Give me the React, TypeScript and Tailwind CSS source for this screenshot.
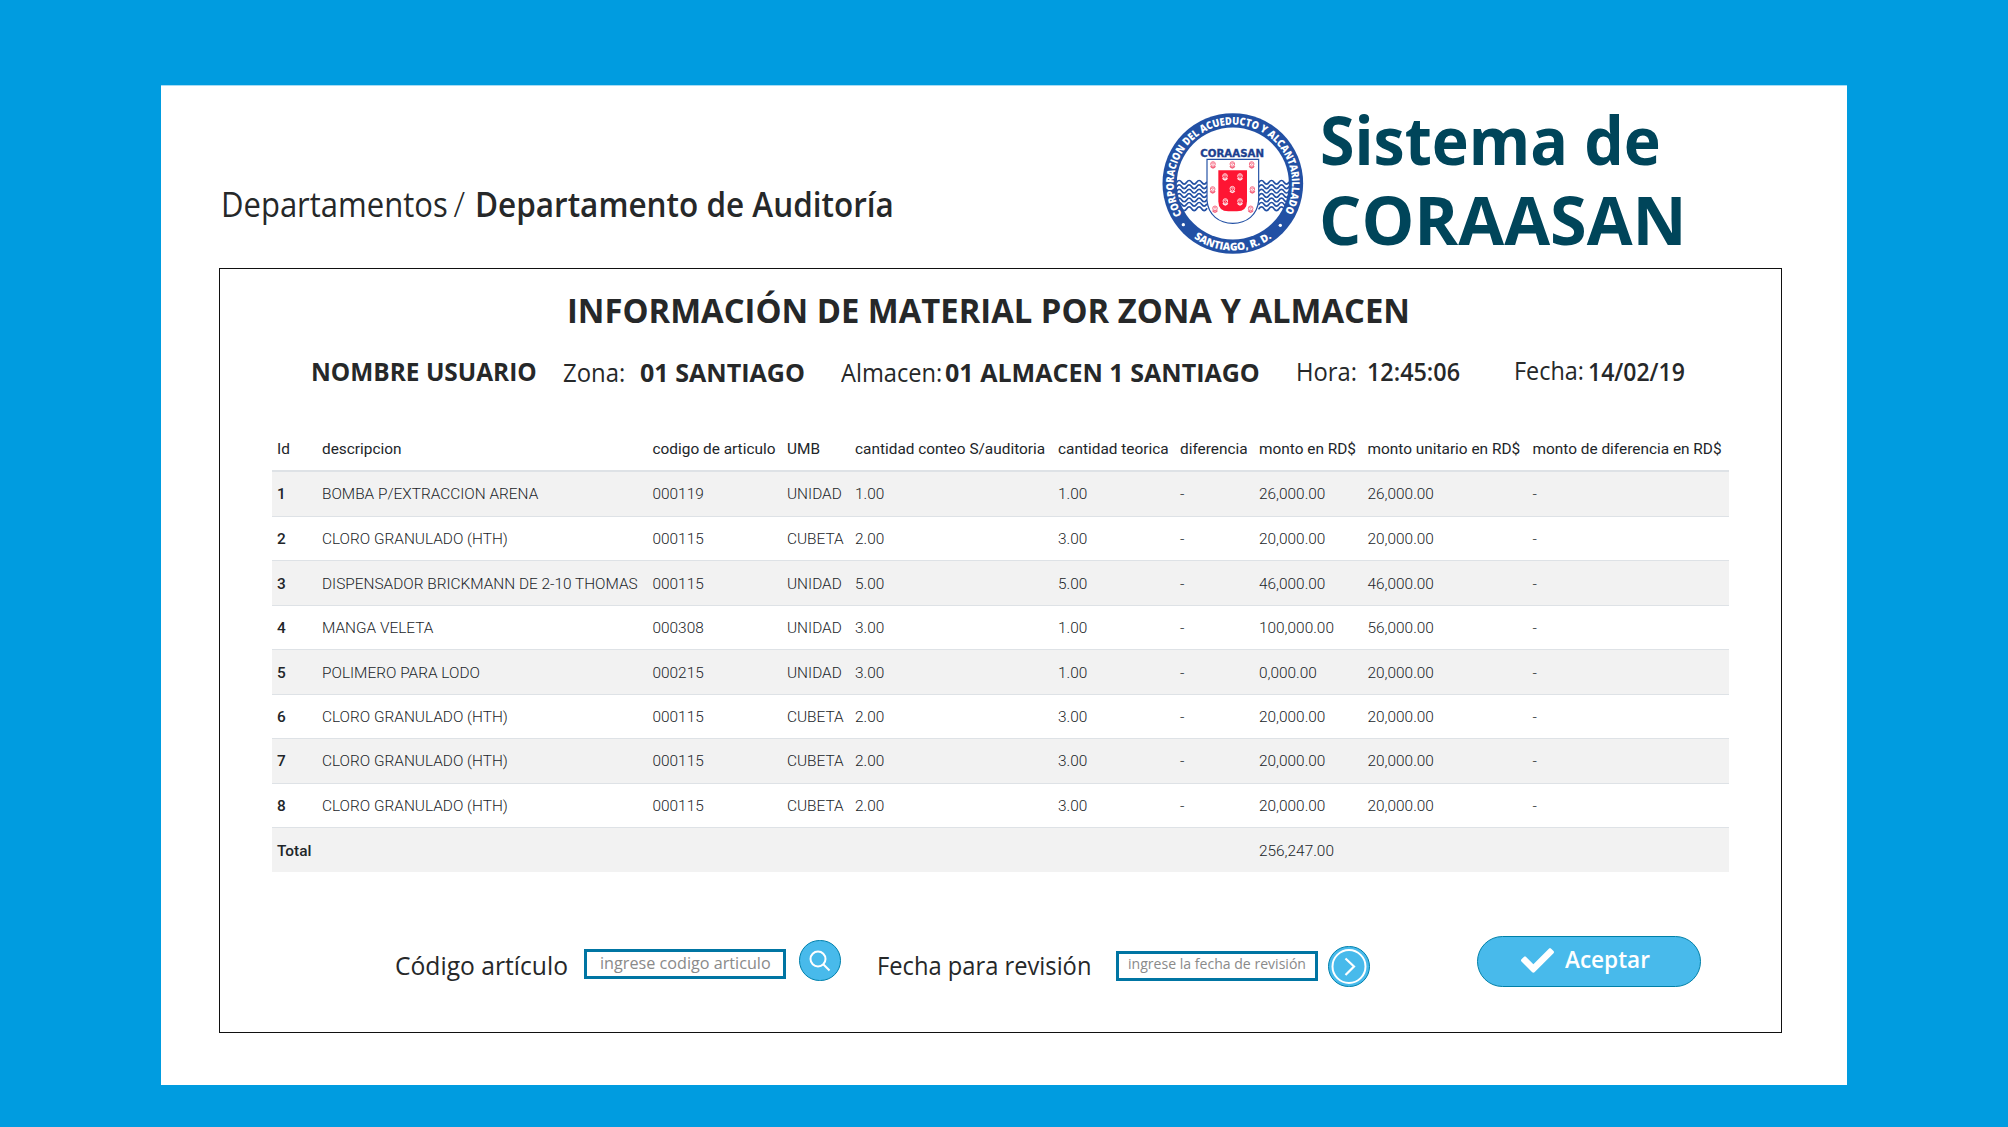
import React from 'react';

type TextProps = { box?: string; fit: string; children: React.ReactNode };

/** One line of text, condensed horizontally inside a box of fixed width. */
function Line({ box = '', fit, children }: TextProps) {
  return (
    <span className={`block shrink-0 whitespace-nowrap ${box}`}>
      <span className={`inline-block origin-left align-top ${fit}`}>{children}</span>
    </span>
  );
}

const columns = [
  'Id',
  'descripcion',
  'codigo de articulo',
  'UMB',
  'cantidad conteo S/auditoria',
  'cantidad teorica',
  'diferencia',
  'monto en RD$',
  'monto unitario en RD$',
  'monto de diferencia en RD$',
];

const rows = [
  ['1', 'BOMBA P/EXTRACCION ARENA', '000119', 'UNIDAD', '1.00', '1.00', '-', '26,000.00', '26,000.00', '-'],
  ['2', 'CLORO GRANULADO (HTH)', '000115', 'CUBETA', '2.00', '3.00', '-', '20,000.00', '20,000.00', '-'],
  ['3', 'DISPENSADOR BRICKMANN DE 2-10 THOMAS', '000115', 'UNIDAD', '5.00', '5.00', '-', '46,000.00', '46,000.00', '-'],
  ['4', 'MANGA VELETA', '000308', 'UNIDAD', '3.00', '1.00', '-', '100,000.00', '56,000.00', '-'],
  ['5', 'POLIMERO PARA LODO', '000215', 'UNIDAD', '3.00', '1.00', '-', '0,000.00', '20,000.00', '-'],
  ['6', 'CLORO GRANULADO (HTH)', '000115', 'CUBETA', '2.00', '3.00', '-', '20,000.00', '20,000.00', '-'],
  ['7', 'CLORO GRANULADO (HTH)', '000115', 'CUBETA', '2.00', '3.00', '-', '20,000.00', '20,000.00', '-'],
  ['8', 'CLORO GRANULADO (HTH)', '000115', 'CUBETA', '2.00', '3.00', '-', '20,000.00', '20,000.00', '-'],
  ['Total', '', '', '', '', '', '', '256,247.00', '', ''],
];

const gridCols =
  'grid grid-cols-[45px_330.5px_134.5px_68px_203px_122px_79px_108.5px_165px_201.5px] items-center';

function Table() {
  return (
    <div className="mt-10 ml-[52px] w-[1457px] text-[15.4px] leading-5 whitespace-nowrap text-[#212529] [font-family:Roboto,sans-serif]">
      <div className={`${gridCols} h-[45px] border-b-2 border-[#dee2e6]`}>
        {columns.map((name) => (
          <div key={name} className="pl-[5px]">
            {name}
          </div>
        ))}
      </div>
      {rows.map((cells, r) => (
        <div
          key={r}
          className={`${gridCols} border-[#dee2e6] ${r === 2 || r === 4 || r === 8 ? 'pt-[2px]' : 'pt-px'} ${
            r % 2 === 0 ? 'bg-[#f2f2f2]' : 'bg-white'
          } ${r < rows.length - 1 ? 'h-[44.5px] border-b' : 'h-[43.5px]'}`}
        >
          {cells.map((cell, c) => (
            <div key={c} className={c === 0 ? 'pl-[5px] font-medium' : 'pl-[5px] font-light'}>
              {cell}
            </div>
          ))}
        </div>
      ))}
    </div>
  );
}

const redEmblems = [
  [189, 195], [247, 195], [305, 195], [188, 270], [307, 270], [195, 328], [302, 328],
];
const whiteEmblems = [
  [225, 231], [270, 231], [247, 269], [226, 306], [270, 306],
];

function Emblem({ x, y, color, hole }: { x: number; y: number; color: string; hole: string }) {
  return (
    <g transform={`translate(${x} ${y})`}>
      <circle cy="-3" r="7" fill={hole} stroke={color} strokeWidth="2.6" />
      <path d="M-4 -3a4 4 0 0 1 8 0M0 -5v6" fill="none" stroke={color} strokeWidth="2" />
      <path d="M-9 4l4-1 5 4 5-4 4 1-3 4-6 3-6-3z" fill={color} />
    </g>
  );
}

function Waves({ x }: { x: number }) {
  return (
    <g fill="none" stroke="#2250a4" strokeWidth="5" strokeLinecap="round">
      {[0, 1, 2, 3, 4, 5, 6].map((i) => (
        <path key={i} d={`M${x} ${247 + i * 13.2}q7.5 -11 15 0t15 0t15 0t15 0t15 0t15 0`} />
      ))}
    </g>
  );
}

function Seal() {
  return (
    <svg viewBox="0 0 510 495" className="mt-[14px] h-[165px] w-[170px] shrink-0">
      <defs>
        <clipPath id="inner">
          <circle cx="248.5" cy="250.5" r="170" />
        </clipPath>
        <path id="ring-top" d="M96.5 343A177.5 177.5 0 1 1 400.5 343" />
        <path id="ring-bottom" d="M90 373.5A200 200 0 0 0 407 373.5" />
      </defs>
      <circle cx="248.5" cy="250.5" r="211" fill="#2250a4" />
      <circle cx="248.5" cy="250.5" r="168" fill="#fff" />
      <g clipPath="url(#inner)">
        <Waves x={80} />
        <Waves x={327} />
      </g>
      <path d="M171 178H326V302C322 345 290 370 248.5 370S175 345 171 302Z" fill="#fff" stroke="#2250a4" strokeWidth="3.5" />
      <path d="M205 211H291V304Q291 334 261 334H235Q205 334 205 304Z" fill="#fe1533" />
      {redEmblems.map(([x, y]) => (
        <Emblem key={`${x}-${y}`} x={x} y={y} color="#f4607a" hole="#fff" />
      ))}
      {whiteEmblems.map(([x, y]) => (
        <Emblem key={`${x}-${y}`} x={x} y={y} color="#ffe9ec" hole="#fe1533" />
      ))}
      <text
        x="151"
        y="171"
        fill="#1c3f8f"
        stroke="#1c3f8f"
        strokeWidth="1"
        textLength="191"
        lengthAdjust="spacingAndGlyphs"
        className="text-[29px] font-bold [font-family:'DejaVu_Sans',sans-serif]"
      >
        CORAASAN
      </text>
      <text fill="#fff" className="text-[32px] font-extrabold [font-family:'Open_Sans',sans-serif]">
        <textPath href="#ring-top" startOffset="0" textLength="742" lengthAdjust="spacingAndGlyphs">
          CORPORACION DEL ACUEDUCTO Y ALCANTARILLADO
        </textPath>
      </text>
      <text fill="#fff" className="text-[32px] font-extrabold [font-family:'Open_Sans',sans-serif]">
        <textPath href="#ring-bottom" startOffset="50%" textAnchor="middle" textLength="250" lengthAdjust="spacingAndGlyphs">
          SANTIAGO, R. D.
        </textPath>
      </text>
      <circle cx="100" cy="374" r="5" fill="#fff" />
      <circle cx="391" cy="376" r="5" fill="#fff" />
    </svg>
  );
}

export default function App() {
  return (
    <div className="h-[1127px] w-[2008px] overflow-hidden bg-[#009ce0] pt-[85px] pl-[161px] text-[#262829] [font-family:'Open_Sans',sans-serif]">
      <div className="h-[1000px] w-[1686px] border-t border-[#a6dcf5] bg-white">
        <header className="flex h-[182px] items-start pl-[59.5px]">
          <nav className="mt-[97.5px] flex w-[929.5px] text-[34px] leading-10">
            <Line box="w-[233px]" fit="scale-x-[0.912]">Departamentos</Line>
            <Line box="w-[21.5px]" fit="font-light">/</Line>
            <Line fit="scale-x-[0.926] font-semibold">Departamento de Auditoría</Line>
          </nav>
          <Seal />
          <h1 className="mt-[12.5px] text-[66px] leading-[80px] font-bold text-[#00455a]">
            <Line fit="scale-x-[0.948]">Sistema de</Line>
            <Line fit="scale-x-[1.008] -ml-[1px]">CORAASAN</Line>
          </h1>
        </header>

        <main className="ml-[58px] h-[765px] w-[1563px] border border-[#111]">
          <h2 className="mt-[20.5px] ml-[346.5px] text-[34px] leading-10 font-bold">
            <Line fit="scale-x-[0.964]">INFORMACIÓN DE MATERIAL POR ZONA Y ALMACEN</Line>
          </h2>

          <div className="mt-[26.5px] flex h-[31px] items-start pl-[90.5px] text-[25px] leading-[30px]">
            <Line box="w-[252px]" fit="scale-x-[0.977] font-bold">NOMBRE USUARIO</Line>
            <Line box="mt-px w-[77.5px]" fit="scale-x-[0.955]">Zona:</Line>
            <Line box="mt-px w-[201px]" fit="scale-x-[1.003] font-bold">01 SANTIAGO</Line>
            <Line box="mt-px w-[103.5px]" fit="scale-x-[0.945]">Almacen:</Line>
            <Line box="mt-px w-[351px]" fit="scale-x-[1.002] font-bold">01 ALMACEN 1 SANTIAGO</Line>
            <Line box="w-[71.5px]" fit="scale-x-[0.95]">Hora:</Line>
            <Line box="w-[147px]" fit="scale-x-[0.935] font-semibold">12:45:06</Line>
            <Line box="-mt-px w-[74px]" fit="scale-x-[0.935]">Fecha:</Line>
            <Line fit="scale-x-[0.92] font-semibold">14/02/19</Line>
          </div>

          <Table />

          <div className="mt-[64.5px] flex items-start pl-[174.5px] text-[26px] leading-[30px]">
            <Line box="mt-[13.5px] w-[189.5px]" fit="scale-x-[0.948]">Código artículo</Line>
            <div className="mt-[13px] h-[30px] w-[202px] border-[3px] border-[#0075a3] pl-[13px] text-[17px] leading-[22px] text-[#8a8a8a]">
              <Line fit="scale-x-[0.952]">ingrese codigo articulo</Line>
            </div>
            <button className="mt-1 ml-[13px] flex h-[41px] w-[42px] items-center justify-center rounded-full border border-[#0080ab] bg-[#48baeb]">
              <svg viewBox="0 0 22 22" className="size-[22px]" fill="none" stroke="#fff" strokeWidth="2">
                <circle cx="9" cy="9" r="7.5" />
                <path d="M14.5 14.5L20.5 20.5" />
              </svg>
            </button>
            <Line box="ml-[35.5px] mt-[14px] w-[239.5px]" fit="scale-x-[0.912]">Fecha para revisión</Line>
            <div className="mt-[15px] h-[30px] w-[202px] border-[3px] border-[#0075a3] pl-[9px] text-[15px] leading-[18px] text-[#8a8a8a]">
              <Line fit="scale-x-[0.938]">ingrese la fecha de revisión</Line>
            </div>
            <button className="mt-[10px] ml-[10px] flex h-[41px] w-[42px] items-center justify-center rounded-full border border-[#0080ab] bg-[#48baeb]">
              <svg viewBox="0 0 42 41" className="h-[41px] w-[42px] shrink-0" fill="none" stroke="#fff" strokeWidth="2">
                <circle cx="21" cy="20.5" r="16.5" />
                <path d="M17.5 12.5L26 20.5L17.5 29" strokeWidth="2.2" />
              </svg>
            </button>
            <button className="ml-[107px] flex h-[51px] w-[224px] items-start rounded-[25.5px] border border-[#0080a8] bg-[#48baeb] pl-[43px] text-2xl leading-[30px] font-semibold text-white">
              <svg viewBox="0 0 512 512" className="mt-[7px] size-[33px] shrink-0" fill="#fff">
                <path d="M173.898 439.404l-166.4-166.4c-9.997-9.997-9.997-26.206 0-36.204l36.203-36.204c9.997-9.998 26.207-9.998 36.204 0L192 312.69 432.095 72.596c9.997-9.997 26.207-9.997 36.204 0l36.203 36.204c9.997 9.997 9.997 26.206 0 36.204l-294.4 294.401c-9.998 9.997-26.207 9.997-36.204-.001z" />
              </svg>
              <Line box="ml-[11px] mt-[7px]" fit="scale-x-[0.94]">Aceptar</Line>
            </button>
          </div>
        </main>
      </div>
    </div>
  );
}
